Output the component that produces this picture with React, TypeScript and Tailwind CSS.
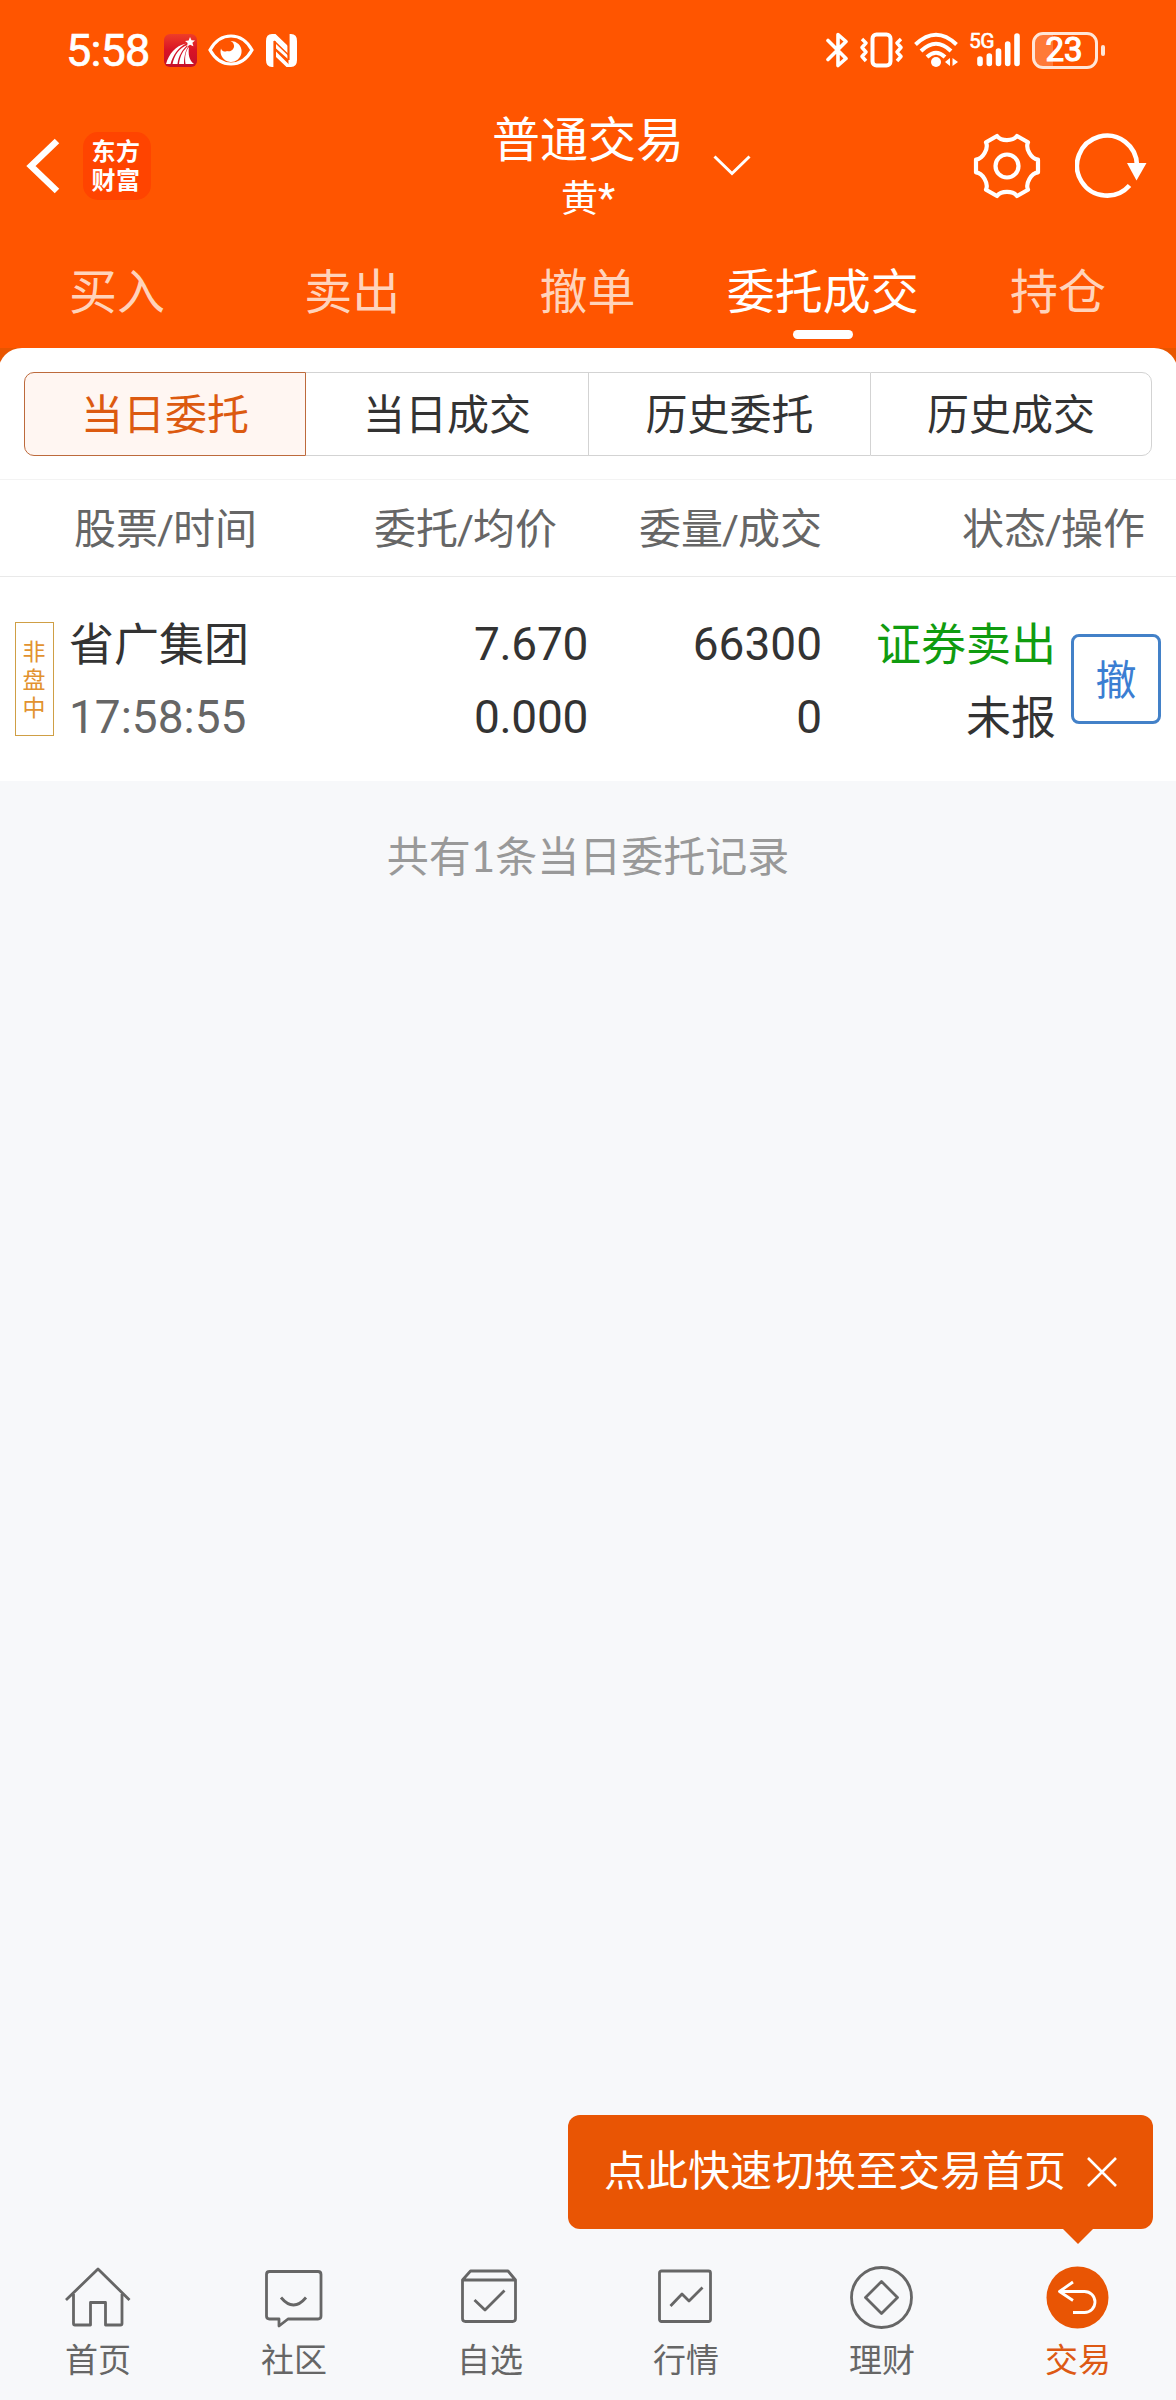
import type { ReactNode } from 'react';

const TABS = ['买入', '卖出', '撤单', '委托成交', '持仓'];
const ACTIVE_TAB = '委托成交';
const SEGMENTS = ['当日委托', '当日成交', '历史委托', '历史成交'];

const COLUMNS = [
    { top: '股票', bottom: '时间', width: 'w-[257px]' },
    { top: '委托', bottom: '均价', width: 'w-[300px]' },
    { top: '委量', bottom: '成交', width: 'w-[265px]' },
    { top: '状态', bottom: '操作', width: 'w-[323px]' },
];

const ORDERS = [
    {
        id: 1, session: ['非', '盘', '中'], name: '省广集团', time: '17:58:55',
        price: '7.670', avgPrice: '0.000', amount: '66300', filled: '0',
        side: '证券卖出', status: '未报',
    },
];

const segmentClass = (i: number) => {
    if (i === 0) return 'rounded-l-[10px] border border-[#bd6a3c] bg-[#fff6f2] text-[#dc5a10]';
    if (i === 1) return 'border-y border-[#d3d3d3]';
    if (i === SEGMENTS.length - 1) return 'rounded-r-[10px] border border-[#d3d3d3]';
    return 'border-y border-l border-[#d3d3d3]';
};

function StatusBar() {
    return (
        <div className="flex h-[100px] items-center pl-[66px] pr-[71px] text-white">
            <span className="w-[98px] pt-[1px] font-['Roboto'] text-[45px] leading-none tracking-[-0.8px] [-webkit-text-stroke:0.7px_white]">5:58</span>
            <svg className="h-[33px] w-[33px]" viewBox="0 0 33 33">
                <defs>
                    <linearGradient id="appRed" x1="0" y1="0" x2="0" y2="1">
                        <stop offset="0" stopColor="#ee3d28" />
                        <stop offset="0.5" stopColor="#d81226" />
                        <stop offset="1" stopColor="#c4102a" />
                    </linearGradient>
                </defs>
                <rect width="33" height="33" rx="6" fill="url(#appRed)" />
                <path d="M26 3l1.5 3.2 3.5.2-2.6 2.3 1 3.6-3.4-1.6-3 2 .6-3.6-2.6-2.2 3.6-.5z" fill="#fff" />
                <path d="M2 30C5 20 11 12 22 9.500C14 14 9 21 6.500 30zM8.500 30C10.500 21 15 14 23.500 11C18 16 14.500 22 13.500 30zM15 30C16 22 19 16 24.500 12C21 17 20 24 20 30zM21.500 30C20.500 23 21.500 17 25 13C24 20 25 26 30 30z" fill="#fff" />
            </svg>
            <svg className="ml-[11px] h-[32px] w-[46px]" viewBox="0 0 46 32">
                <path d="M2 16C7 7 14 2 23 2s16 5 21 14c-5 9-12 14-21 14S7 25 2 16z" fill="none" stroke="#fff" strokeWidth="3.2" />
                <path d="M22.500 7A10.500 10.500 0 1 1 13 14.500A4 4 0 0 0 19 17A5 5 0 0 0 22.500 7z" fill="#fff" />
            </svg>
            <svg className="ml-3 h-[33px] w-[31px]" viewBox="0 0 31 33">
                <path d="M6 0H8.500V33H6Q0 33 0 26V7Q0 0 6 0zM25 0H22.500V33H25Q31 33 31 26V7Q31 0 25 0z" fill="#fff" />
                <path d="M7.500 0H9.500L22 12V19.500L8 6zM10 10L22 21.500V25L10 14.500zM10 17.500L23.500 31V33H20.500L10 23z" fill="#fff" />
                <path d="M8.500 7V33M22.500 0V26" stroke="#ff5500" strokeWidth="2.200" />
            </svg>

            <svg className="ml-auto h-[36px] w-[23px]" viewBox="0 0 23 36">
                <path d="M2 8.500L20 26.500L12 33.500V2.500L20 9.500L2 27.500" fill="none" stroke="#fff" strokeWidth="3.600" strokeLinejoin="round" strokeLinecap="round" />
            </svg>
            <svg className="ml-[11px] h-[36px] w-[43px]" viewBox="0 0 43 36" fill="none" stroke="#fff">
                <rect x="12.500" y="2.500" width="18" height="31" rx="4" strokeWidth="4" />
                <path d="M2 7L6 11L2 15.500L6 20L2 24.500L6 29M41 7L37 11L41 15.500L37 20L41 24.500L37 29" strokeWidth="3.400" strokeLinejoin="round" />
            </svg>
            <svg className="ml-[11px] h-[36px] w-[45px]" viewBox="0 0 45 36" fill="none" stroke="#fff" strokeWidth="4">
                <path d="M1.500 12.500Q22 -7 42.500 12.500M7 19Q22 4.500 37 19M13 25Q22 16.500 31 25" />
                <circle cx="22" cy="30" r="5" fill="#fff" stroke="none" />
                <path d="M36 26v8l-5-4zM38.500 26v8l5.500-4z" fill="#fff" stroke="none" />
            </svg>
            <div className="relative ml-[11px] h-[36px] w-[51px]">
                <span className="absolute -top-[1px] -left-[1px] font-['Roboto'] text-[21px] leading-none tracking-[-0.5px] [-webkit-text-stroke:0.6px_white]">5G</span>
                <svg className="h-[36px] w-[51px]" viewBox="0 0 51 36" stroke="#fff" strokeWidth="5.600" strokeLinecap="round">
                    <path d="M10 27V31.500M19.300 24V31.500M28.500 19V31.500M37.700 12V31.500M47 4V31.500" />
                </svg>
            </div>
            <div className="ml-[11px] flex items-center">
                <div className="flex h-[37px] w-[66px] items-center justify-center rounded-[11px] border-[3px] border-[#ffe6d8] bg-[linear-gradient(to_right,#ff7a38_18px,transparent_18px)] pr-[2px] font-['Roboto'] text-[33px] leading-none [-webkit-text-stroke:1.2px_white]">
                    <span className="-mt-[1px]">23</span>
                </div>
                <div className="ml-[3px] h-[11px] w-[4px] rounded-sm bg-[#ffe6d8]" />
            </div>
        </div>
    );
}

function TitleBar() {
    return (
        <div className="flex h-[132px] items-center pl-[26px] text-white">
            <svg className="h-[56px] w-[34px]" viewBox="0 0 34 56">
                <path d="M31 3L5 28L31 53" fill="none" stroke="#fff" strokeWidth="6.500" />
            </svg>
            <div className="ml-[23px] flex h-[68px] w-[68px] flex-col items-center justify-center rounded-[15px] bg-[#ff4400] pr-[2px] pb-[3px] text-[24px] leading-[29px] font-bold tracking-[0.5px]">
                <span>东方</span>
                <span>财富</span>
            </div>
            <div className="ml-[341px] flex w-48 flex-col items-center">
                <span className="mt-[5px] text-[48px] leading-[60px]">普通交易</span>
                <span className="text-[37px] leading-[58px]">黄<span className="font-['Roboto'] text-[40px]">*</span></span>
            </div>
            <svg className="ml-[29px] h-[22px] w-[38px]" viewBox="0 0 38 22">
                <path d="M1.500 1.500L19 18.500L36.500 1.500" fill="none" stroke="#fff" strokeWidth="3" />
            </svg>
            <svg className="ml-[222px] h-[66px] w-[68px]" viewBox="-34 -33 68 66" fill="none" stroke="#fff" strokeWidth="4.200" strokeLinejoin="round">
                <path d="M-10 -30C-6 -24.500 6 -24.500 10 -30L21 -23.700C18.200 -17.500 24.200 -7 31 -6.300V6.300C24.200 7 18.200 17.500 21 23.700L10 30C6 24.500 -6 24.500 -10 30L-21 23.700C-18.200 17.500 -24.200 7 -31 6.300V-6.300C-24.200 -7 -18.200 -17.500 -21 -23.700Z" />
                <circle r="11.500" />
            </svg>
            <svg className="ml-[34px] h-[66px] w-[72px]" viewBox="0 0 72 66">
                <path d="M54.500 52.500A30 30 0 1 1 62 33" fill="none" stroke="#fff" strokeWidth="4.600" />
                <path d="M52 30H71.500L61.500 47.500z" fill="#fff" />
            </svg>
        </div>
    );
}

function TopTabs() {
    return (
        <div className="grid h-[116px] grid-cols-5 text-[48px] leading-none">
            {TABS.map((tab) => (
                <div key={tab} className={`flex flex-col items-center pt-[35px] ${tab === ACTIVE_TAB ? 'text-white' : 'text-[#ffd3bb]'}`}>
                    <span className="-ml-[1px] whitespace-nowrap">{tab}</span>
                    {tab === ACTIVE_TAB && <div className="mt-[15px] h-[9px] w-[60px] rounded-full bg-white" />}
                </div>
            ))}
        </div>
    );
}

function Segments() {
    return (
        <div className="bg-[#e85500]">
            <div className="-mx-[2px] h-[131px] rounded-t-3xl bg-white px-[26px] pt-6">
                <div className="flex h-[84px] text-[42px] leading-none text-[#333333]">
                    {SEGMENTS.map((label, i) => (
                        <div key={label} className={`flex w-[282px] items-center justify-center ${segmentClass(i)}`}>
                            {label}
                        </div>
                    ))}
                </div>
            </div>
        </div>
    );
}

function OrderTable() {
    return (
        <div className="bg-white">
            <div className="flex h-[98px] items-center border-y border-t-[#f3f3f3] border-b-[#e9e9e9] pt-[1px] text-[42px] leading-none whitespace-nowrap text-[#666666]">
                {COLUMNS.map((col) => (
                    <span key={col.top} className={`text-right ${col.width}`}>
                        {col.top}<span className="-mx-[1px] font-['Roboto'] text-[41px]">/</span>{col.bottom}
                    </span>
                ))}
            </div>
            {ORDERS.map((order) => (
                <div key={order.id} className="flex h-[204px] items-center pl-[15px] text-[45px] leading-[73px] whitespace-nowrap text-[#333333]">
                    <div className="flex h-[114px] w-[39px] flex-col items-center justify-center border border-[#cf9f45] pr-[1px] pb-[1px] text-[23px] leading-[28px] text-[#e2922f]">
                        {order.session.map((ch) => <span key={ch}>{ch}</span>)}
                    </div>
                    <div className="mt-[3px] ml-[15px] flex w-[180px] flex-col">
                        <span>{order.name}</span>
                        <span className="font-['Roboto'] text-[46px] text-[#666666]">{order.time}</span>
                    </div>
                    <div className="mt-[3px] flex w-[339px] flex-col text-right font-['Roboto'] text-[46px] tracking-[-0.3px]">
                        <span>{order.price}</span>
                        <span>{order.avgPrice}</span>
                    </div>
                    <div className="mt-[3px] flex w-[234px] flex-col text-right font-['Roboto'] text-[46px]">
                        <span>{order.amount}</span>
                        <span>{order.filled}</span>
                    </div>
                    <div className="mt-[3px] flex w-[234px] flex-col text-right">
                        <span className="text-[#109c10]">{order.side}</span>
                        <span>{order.status}</span>
                    </div>
                    <button className="ml-[15px] flex h-[90px] w-[90px] items-center justify-center rounded-lg border-[3px] border-[#4381c8] text-[41px] leading-none text-[#3b7ed2]">
                        撤
                    </button>
                </div>
            ))}
        </div>
    );
}

function SwitchTip() {
    return (
        <div className="mr-[23px] ml-auto flex w-[585px] flex-col">
            <div className="flex h-[114px] items-center rounded-xl bg-[#e95504] pb-[4px] pl-[36px] text-[42px] leading-none text-white">
                <span className="whitespace-nowrap">点此快速切换至交易首页</span>
                <svg className="mt-[4px] ml-[20px] h-[32px] w-[32px]" viewBox="0 0 32 32">
                    <path d="M2 2L30 30M30 2L2 30" stroke="#fff" strokeWidth="2.600" />
                </svg>
            </div>
            <svg className="ml-[495px] h-[15px] w-[30px]" viewBox="0 0 30 15">
                <path d="M0 0H30L15 15z" fill="#e95504" />
            </svg>
        </div>
    );
}

const NAV: { label: string; icon: ReactNode }[] = [
    {
        label: '首页',
        icon: <path d="M2 37L34 6L65.500 37M9.500 31V60.500Q9.500 62 11 62H26.500V39.500H41.500V62H56.500Q58 62 58 60.500V31" />,
    },
    {
        label: '社区',
        icon: (
            <>
                <path d="M9.500 8.500H58Q61 8.500 61 11.500V53Q61 56 58 56H28L19 63V56H9.500Q6.500 56 6.500 53V11.500Q6.500 8.500 9.500 8.500z" />
                <path d="M21 34.500Q33.500 49.500 46 34.500" />
            </>
        ),
    },
    {
        label: '自选',
        icon: (
            <>
                <path d="M6.500 17L14.500 8H52L59.500 17V55.500Q59.500 58.500 56.500 58.500H9.500Q6.500 58.500 6.500 55.500zM6.500 17H59.500" />
                <path d="M18.500 37L29 47L48.500 27.500" />
            </>
        ),
    },
    {
        label: '行情',
        icon: (
            <>
                <rect x="7.500" y="8" width="51" height="50.500" rx="2" />
                <path d="M18.500 43L30 31L37 38L50.500 24.500" />
            </>
        ),
    },
    {
        label: '理财',
        icon: (
            <>
                <circle cx="33.500" cy="34.500" r="30" />
                <path d="M33.500 18.500L49.500 34.500L33.500 50.500L17.500 34.500z" />
            </>
        ),
    },
    {
        label: '交易',
        icon: (
            <>
                <circle cx="33.500" cy="34.500" r="31" fill="#e95504" stroke="none" />
                <path d="M29 19L15.500 28.500L29 37.500M15.500 28.500H40.500A10.500 10.500 0 0 1 40.500 49.500H29" stroke="#fff" />
            </>
        ),
    },
];

function BottomNav() {
    return (
        <div className="grid h-[156px] grid-cols-6 text-[33px] leading-none">
            {NAV.map(({ label, icon }) => (
                <div key={label} className={`flex flex-col items-center pt-[19px] ${label === '交易' ? 'text-[#dd5914]' : 'text-[#666666]'}`}>
                    <svg className="h-[68px] w-[68px]" viewBox="0 0 68 68" fill="none" stroke="currentColor" strokeWidth="2.800" strokeLinejoin="round">
                        {icon}
                    </svg>
                    <span className="mt-[12px]">{label}</span>
                </div>
            ))}
        </div>
    );
}

export default function App() {
    return (
        <div className="flex h-[2400px] w-[1176px] flex-col overflow-hidden bg-[#f7f8fa] font-['Lato','Noto_Sans_CJK_SC',sans-serif]">
            <div className="bg-[#ff5500]">
                <StatusBar />
                <TitleBar />
                <TopTabs />
            </div>
            <Segments />
            <OrderTable />
            <p className="mt-[54px] text-center text-[42px] leading-none text-[#999999]">共有1条当日委托记录</p>
            <div className="mt-auto flex flex-col">
                <SwitchTip />
                <BottomNav />
            </div>
        </div>
    );
}
